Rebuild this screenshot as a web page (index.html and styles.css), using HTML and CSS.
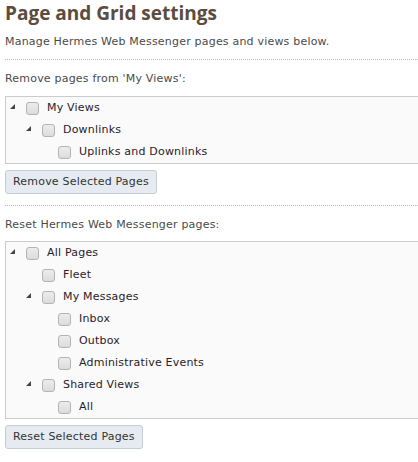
FILE: index.html
```html
<!DOCTYPE html>
<html>
<head>
<meta charset="utf-8">
<link rel="stylesheet" href="styles.css">
</head>
<body>
<div class="page">
  <h1 class="title">Page and Grid settings</h1>
  <p class="intro">Manage Hermes Web Messenger pages and views below.</p>
  <div class="sep"></div>
  <p class="label">Remove pages from 'My Views':</p>
  <ul class="tree">
    <li class="row l0"><span class="tog open"></span><span class="cb"></span><span class="txt">My Views</span></li>
    <li class="row l1"><span class="tog open"></span><span class="cb"></span><span class="txt">Downlinks</span></li>
    <li class="row l2"><span class="tog"></span><span class="cb"></span><span class="txt">Uplinks and Downlinks</span></li>
  </ul>
  <button class="btn">Remove Selected Pages</button>
  <div class="sep sep2"></div>
  <p class="label">Reset Hermes Web Messenger pages:</p>
  <ul class="tree tree2">
    <li class="row l0"><span class="tog open"></span><span class="cb"></span><span class="txt">All Pages</span></li>
    <li class="row l1"><span class="tog"></span><span class="cb"></span><span class="txt">Fleet</span></li>
    <li class="row l1"><span class="tog open"></span><span class="cb"></span><span class="txt">My Messages</span></li>
    <li class="row l2"><span class="tog"></span><span class="cb"></span><span class="txt">Inbox</span></li>
    <li class="row l2"><span class="tog"></span><span class="cb"></span><span class="txt">Outbox</span></li>
    <li class="row l2"><span class="tog"></span><span class="cb"></span><span class="txt">Administrative Events</span></li>
    <li class="row l1"><span class="tog open"></span><span class="cb"></span><span class="txt">Shared Views</span></li>
    <li class="row l2"><span class="tog"></span><span class="cb"></span><span class="txt">All</span></li>
  </ul>
  <button class="btn">Reset Selected Pages</button>
</div>
</body>
</html>
```

FILE: styles.css
```css
html, body {
  margin: 0;
  padding: 0;
  background: #ffffff;
  overflow: hidden;
}
body {
  font-family: "DejaVu Sans", Verdana, sans-serif;
  font-size: 11px;
  letter-spacing: 0.2px;
  color: #333333;
}
.page {
  box-sizing: border-box;
  width: 100%;
  padding: 0 0 0 5px;
  overflow: hidden;
}
.title {
  font-family: "Open Sans", sans-serif;
  font-weight: 700;
  font-size: 19px;
  letter-spacing: 0;
  line-height: 26px;
  color: #5a4c3e;
  margin: 0;
  padding-top: 0;
}
.intro {
  margin: 0;
  line-height: 14px;
  padding-top: 9px;
  color: #4a4a4a;
}
.sep {
  border-top: 1px dotted #bbbbbb;
  margin-top: 10px;
  margin-right: -10px;
}
.sep2 {
  margin-top: 11px;
}
.label {
  margin: 0;
  padding-top: 12px;
  line-height: 14px;
  color: #4a4a4a;
}
.tree {
  list-style: none;
  margin: 10px -10px 0 0;
  padding: 0;
  border: 1px solid #cccccc;
  background: #fafafa;
}
.tree2 {
  margin-top: 9px;
}
.row {
  display: flex;
  align-items: center;
  height: 22px;
}
.l0 { padding-left: 4px; }
.l1 { padding-left: 20px; }
.l2 { padding-left: 36px; }
.tog {
  width: 16px;
  height: 16px;
  position: relative;
  flex: none;
}
.tog.open::after {
  content: "";
  position: absolute;
  left: 0;
  top: 4px;
  width: 0;
  height: 0;
  border-left: 5px solid transparent;
  border-bottom: 5px solid #444444;
}
.cb {
  width: 11px;
  height: 11px;
  border: 1px solid #b3b3b3;
  border-radius: 3px;
  background: linear-gradient(#ececec, #dcdcdc);
  flex: none;
}
.txt {
  margin-left: 8px;
  color: #2a1a2a;
  white-space: nowrap;
  padding-bottom: 1px;
}
.btn {
  display: block;
  margin-top: 6px;
  font-family: "DejaVu Sans", Verdana, sans-serif;
  font-size: 11px;
  letter-spacing: 0.2px;
  color: #333333;
  background: #e6ebf2;
  border: 1px solid #c4ccd8;
  border-radius: 3px;
  height: 24px;
  padding: 0 7px 1px;
}
```
